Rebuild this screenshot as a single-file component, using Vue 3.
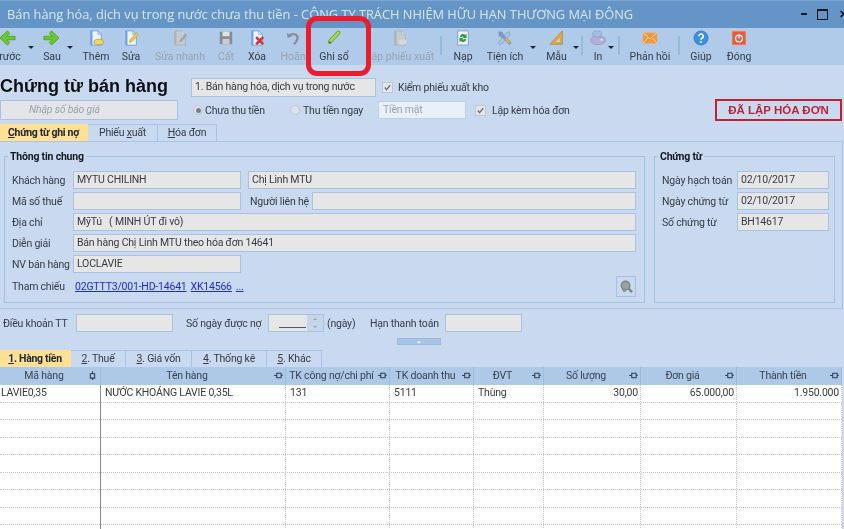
<template>
  <div class="app">
    <header class="titlebar">
      <span class="title">Bán hàng hóa, dịch vụ trong nước chưa thu tiền - CÔNG TY TRÁCH NHIỆM HỮU HẠN THƯƠNG MẠI ĐÔNG</span>
      <div class="winctl">
        <span class="w-min"></span>
        <span class="w-max"></span>
        <span class="w-close">✕</span>
      </div>
    </header>

    <nav class="toolbar">
      <template v-for="(t, i) in tools" :key="i">
        <div v-if="t.kind === 'caret'" class="t-caret" :style="{ width: t.w + 'px' }"><i></i></div>
        <div v-else-if="t.kind === 'sep'" class="t-sep" :style="{ width: t.w + 'px' }"><i></i></div>
        <div v-else-if="t.kind === 'gap'" class="t-gap" :style="{ width: t.w + 'px' }"></div>
        <div v-else class="t-item" :class="{ off: t.off }" :style="{ width: t.w + 'px' }">
          <svg class="t-icon" viewBox="0 0 18 18" width="16" height="16" v-html="t.svg"></svg>
          <span class="t-label">{{ t.label }}</span>
        </div>
      </template>
    </nav>

    <section class="head">
      <div class="head-row one">
        <h1 class="doc-title">Chứng từ bán hàng</h1>
        <div class="inp select">1. Bán hàng hóa, dịch vụ trong nước</div>
        <span class="check"><svg viewBox="0 0 10 10"><path d="M2 5l2 2.4L8 2.5" /></svg></span>
        <span class="lb">Kiểm phiếu xuất kho</span>
      </div>
      <div class="head-row two">
        <div class="inp quote">Nhập số báo giá</div>
        <span class="radio on"></span><span class="lb r1">Chưa thu tiền</span>
        <span class="radio r2"></span><span class="lb r3">Thu tiền ngay</span>
        <div class="inp cash">Tiền mặt</div>
        <span class="check c2"><svg viewBox="0 0 10 10"><path d="M2 5l2 2.4L8 2.5" /></svg></span>
        <span class="lb">Lập kèm hóa đơn</span>
        <div class="stamp">ĐÃ LẬP HÓA ĐƠN</div>
      </div>
    </section>

    <div class="tabs top-tabs">
      <div class="tab active t1"><u>C</u>hứng từ ghi nợ</div>
      <div class="tab t2">Phiếu <u>x</u>uất</div>
      <div class="tab t3"><u>H</u>óa đơn</div>
    </div>

    <section class="panel">
      <fieldset class="group g1">
        <legend>Thông tin chung</legend>
        <div class="rows">
          <div class="row"><label>Khách hàng</label><div class="inp w168">MYTU CHILINH</div><div class="inp grow ml7">Chị Linh MTU</div></div>
          <div class="row"><label>Mã số thuế</label><div class="inp w168"></div><label class="lb2">Người liên hệ</label><div class="inp grow"></div></div>
          <div class="row"><label>Địa chỉ</label><div class="inp grow">MỹTú &nbsp; ( MINH ÚT đi vô)</div></div>
          <div class="row"><label>Diễn giải</label><div class="inp grow">Bán hàng Chị Linh MTU theo hóa đơn 14641</div></div>
          <div class="row"><label>NV bán hàng</label><div class="inp w168">LOCLAVIE</div></div>
          <div class="row refs">
            <label>Tham chiếu</label>
            <a>02GTTT3/001-HD-14641</a><a>XK14566</a><a>...</a>
            <button class="lookup" type="button">
              <svg viewBox="0 0 16 16" width="15" height="15"><circle cx="7" cy="7" r="4.6" fill="#9aa29c" stroke="#7d8580" stroke-width="1.4"/><path d="M10 10l4 4" stroke="#7d8580" stroke-width="2.4"/><path d="M3 11l3-2 2 4-3 1z" fill="#8b918d"/></svg>
            </button>
          </div>
        </div>
      </fieldset>
      <fieldset class="group g2">
        <legend>Chứng từ</legend>
        <div class="rows">
          <div class="row"><label class="l2">Ngày hạch toán</label><div class="inp grow">02/10/2017</div></div>
          <div class="row"><label class="l2">Ngày chứng từ</label><div class="inp grow">02/10/2017</div></div>
          <div class="row"><label class="l2">Số chứng từ</label><div class="inp grow">BH14617</div></div>
        </div>
      </fieldset>
    </section>

    <section class="terms">
      <span class="lb tl1">Điều khoản TT</span>
      <div class="inp ti1"></div>
      <span class="lb tl2">Số ngày được nợ</span>
      <div class="spin"><div class="spin-val"><i></i></div><div class="spin-btn"><b></b><b class="d"></b></div></div>
      <span class="lb tl3">(ngày)</span>
      <span class="lb tl4">Hạn thanh toán</span>
      <div class="inp ti2"></div>
    </section>
    <div class="collapse-wrap"><div class="collapse"><i></i></div></div>

    <div class="tabs low-tabs">
      <div v-for="(t, i) in lowTabs" :key="t.n" class="tab" :class="{ active: i === 0 }" :style="{ width: t.w + 'px' }"><u>{{ t.n }}</u>. {{ t.label }}</div>
    </div>

    <div class="grid">
      <div class="g-row g-head">
        <div v-for="c in cols" :key="c.name" class="g-cell" :style="{ width: c.w + 'px' }">
          <span>{{ c.name }}</span>
          <svg class="pin" :class="{ vert: c.vert }" viewBox="0 0 10 8" width="9" height="7"><path d="M0 4h3M3 1.5h5v5H3zM8 3.8h2" fill="none" stroke="#2c3d52" stroke-width="1.2"/></svg>
        </div>
      </div>
      <div class="g-row g-data">
        <div v-for="(c, i) in cols" :key="c.name" class="g-cell" :class="c.cls" :style="{ width: c.w + 'px' }">{{ firstRow[i] }}</div>
      </div>
      <div v-for="r in 8" :key="r" class="g-row g-data">
        <div v-for="c in cols" :key="c.name" class="g-cell" :class="c.cls" :style="{ width: c.w + 'px' }"></div>
      </div>
    </div>

    <div class="annot"></div>
  </div>
</template>

<script setup>
const doc = (inner, edge = '#6da3dc', fill = '#edf4fc') =>
  `<path d="M3 1h8l4 4v12H3z" fill="${fill}" stroke="${edge}"/><path d="M3 1h2v16H3z" fill="${edge}"/><path d="M11 1v4h4z" fill="#cfe0f3" stroke="${edge}" stroke-width=".6"/>${inner}`
const grayDoc = (inner) => doc(inner, '#aeb3b8', '#c6c9cd')
const arrowL = '<path d="M9.500 1L1 9l8.500 8 2.500-3-3-3h9V7H9l3-3z" fill="#6cc82c" stroke="#3f9a1a" stroke-width=".8" stroke-linejoin="round"/>'
const arrowR = '<path d="M8.500 1L17 9l-8.500 8-2.500-3 3-3H0V7h9L6 4z" fill="#6cc82c" stroke="#3f9a1a" stroke-width=".8" stroke-linejoin="round"/>'

const tools = [
  { label: 'Trước', w: 34, svg: arrowL },
  { kind: 'caret', w: 14 },
  { label: 'Sau', w: 28, svg: arrowR },
  { kind: 'caret', w: 8 },
  { label: 'Thêm', w: 44, svg: doc('<ellipse cx="12" cy="13.500" rx="5.500" ry="3" fill="#f0d65a" stroke="#a88f2e" stroke-width=".7"/>') },
  { label: 'Sửa', w: 26, svg: doc('<path d="M7 14l1-3 7-8 2.500 2-7 8z" fill="#f1c640" stroke="#b5902a" stroke-width=".5"/>') },
  { label: 'Sửa nhanh', w: 72, off: true, svg: grayDoc('<path d="M8 14l1-3 6-7 2 2-6 7z" fill="#a4a7aa"/>') },
  { label: 'Cất', w: 20, off: true, svg: '<path d="M2 2h14v14H2z" fill="#878c92"/><path d="M5 2h8v5H5z" fill="#dfe1e4"/><path d="M5 10h8v6H5z" fill="#c9ccd0"/>' },
  { label: 'Xóa', w: 42, svg: doc('<path d="M8 8l8 8M16 8l-8 8" stroke="#d8393d" stroke-width="3"/>') },
  { label: 'Hoãn', w: 30, off: true, svg: '<path d="M2 3l1 6 5-2z" fill="#8a8f94"/><path d="M5 6c5-3 10-1 9 4-.4 2.500-2 4-4 6" fill="none" stroke="#8a8f94" stroke-width="2.600"/>' },
  { label: 'Ghi sổ', w: 52, svg: '<path d="M4.500 13L14 3" stroke="#5f9a28" stroke-width="4.600" stroke-linecap="round"/><path d="M4.500 13L14 3" stroke="#a0dc4e" stroke-width="3" stroke-linecap="round"/><path d="M3 15.500l.8-3.200 2.400 2.400z" fill="#5c5c50"/>' },
  { label: 'Lập phiếu xuất', w: 80, off: true, svg: grayDoc('<ellipse cx="12" cy="13.500" rx="5" ry="3" fill="#d5d7da"/>') },
  { kind: 'sep', w: 2 },
  { label: 'Nạp', w: 42, svg: '<path d="M3 1h12v16H3z" fill="#e8f0f8" stroke="#7f9cbf"/><path d="M5.500 8a3.500 3.500 0 0 1 6-2.500l1.500-1V9H8.500l1.500-1.500A2 2 0 0 0 7.500 8zM12.500 10a3.500 3.500 0 0 1-6 2.500l-1.500 1V9h4.500L8 10.500a2 2 0 0 0 2.500-.5z" fill="#2f9e36"/>' },
  { label: 'Tiện ích', w: 42, svg: '<path d="M14 2l-3 1-8 9-1.500 3 2 1.500 3-2 8-9z" fill="#a9c6e0" stroke="#6e8fb3" stroke-width=".6"/><path d="M2 2l4 .5 1.500 3.500 8.500 8-2 2.500-8.500-8.500L2.500 7z" fill="#7b9cbd" stroke="#5a7fa8" stroke-width=".5"/><path d="M9.500 9.500l5 5" stroke="#e6b04a" stroke-width="2.400"/>' },
  { kind: 'caret', w: 14 },
  { label: 'Mẫu', w: 33, svg: '<path d="M1 16L15 1v15z" fill="#dba94a" stroke="#a07a2c" stroke-width=".7"/><path d="M8 13.500l4-4.500v4.500z" fill="#c9d8e8"/>' },
  { kind: 'caret', w: 6 },
  { kind: 'sep', w: 6 },
  { kind: 'gap', w: 3 },
  { label: 'In', w: 20, svg: '<ellipse cx="9" cy="11.500" rx="8.500" ry="5" fill="#b5aedb" stroke="#8a86b8" stroke-width=".6"/><ellipse cx="8" cy="4.500" rx="5" ry="3.500" fill="#9fbfe6" stroke="#7a98c0" stroke-width=".6"/><circle cx="13" cy="11" r="1.200" fill="#f2f2fa"/>' },
  { kind: 'caret', w: 6 },
  { kind: 'sep', w: 10 },
  { label: 'Phản hồi', w: 52, svg: '<path d="M1 3h16v12H1z" fill="#f4983a"/><path d="M1 3l8 7 8-7M1 15l6-6.500M17 15l-6-6.500" fill="none" stroke="#fbdcb0" stroke-width="1"/>' },
  { kind: 'sep', w: 6 },
  { label: 'Giúp', w: 38, svg: '<circle cx="9" cy="9" r="8" fill="#3d8fe0" stroke="#2a6cb6" stroke-width=".7"/><path d="M6.500 7a2.500 2.500 0 1 1 3.500 2.300c-.8.400-1 .8-1 1.700" fill="none" stroke="#fff" stroke-width="1.700"/><circle cx="9" cy="13.500" r="1.100" fill="#fff"/>' },
  { label: 'Đóng', w: 38, svg: '<path d="M1 1h16v16H1z" fill="#e85a3e" stroke="#d5c4b4"/><circle cx="9" cy="9.500" r="3.800" fill="none" stroke="#fff" stroke-width="1.400"/><path d="M9 5.500v4" stroke="#fff" stroke-width="1.400"/>' },
]

const lowTabs = [
  { n: '1', label: 'Hàng tiền', w: 71 },
  { n: '2', label: 'Thuế', w: 55 },
  { n: '3', label: 'Giá vốn', w: 66 },
  { n: '4', label: 'Thống kê', w: 75 },
  { n: '5', label: 'Khác', w: 55 },
]

const cols = [
  { name: 'Mã hàng', w: 101, vert: true, cls: 'first' },
  { name: 'Tên hàng', w: 185, cls: '' },
  { name: 'TK công nợ/chi phí', w: 104, cls: '' },
  { name: 'TK doanh thu', w: 84, cls: '' },
  { name: 'ĐVT', w: 70, cls: '' },
  { name: 'Số lượng', w: 97, cls: 'num' },
  { name: 'Đơn giá', w: 96, cls: 'num' },
  { name: 'Thành tiền', w: 105, cls: 'num' },
]
const firstRow = ['LAVIE0,35', 'NƯỚC KHOÁNG LAVIE 0,35L', '131', '5111', 'Thùng', '30,00', '65.000,00', '1.950.000']
</script>

<style>
html, body { margin: 0; background: #c9daf0; }
</style>

<style scoped>
.app {
  position: relative;
  width: 844px;
  height: 529px;
  overflow: hidden;
  background: #c9daf0;
  font-family: Roboto, "Liberation Sans", sans-serif;
  font-size: 10.5px;
  letter-spacing: -0.2px;
  color: #363b45;
  filter: blur(0.35px);
}
.titlebar {
  height: 28px;
  box-sizing: border-box;
  background: #6595c6;
  display: flex;
  align-items: center;
  padding: 0 0 1px 7px;
  border-top: 1px solid #7ea6d0;
}
.title {
  font-family: "Open Sans", sans-serif;
  font-size: 12.8px;
  letter-spacing: 0;
  color: #dbe6f3;
  white-space: nowrap;
}
.winctl {
  margin-left: auto;
  display: flex;
  align-items: center;
  color: #10151c;
  width: 44px;
  flex: none;
}
.w-min { width: 6px; height: 2px; background: #10151c; margin-left: 1px; flex: none; }
.w-max { width: 9px; height: 8px; border: 1px solid #10151c; border-top-width: 2px; margin-left: 10px; box-sizing: content-box; flex: none; }
.w-close { font-size: 11px; font-weight: 700; margin-left: 11px; flex: none; }

.toolbar {
  height: 37px;
  background: #afcbe9;
  display: flex;
  margin-left: -10px;
}
.t-item {
  flex: none;
  display: flex;
  flex-direction: column;
  align-items: center;
  padding-top: 2px;
  box-sizing: border-box;
}
.t-icon { flex: none; overflow: visible; }
.t-label {
  margin-top: 5px;
  font-size: 10.5px;
  letter-spacing: 0;
  line-height: 12px;
  white-space: nowrap;
  color: #333d4b;
}
.off .t-label { color: #98a3b0; }
.t-caret, .t-gap { flex: none; position: relative; }
.t-caret i {
  position: absolute;
  left: 50%;
  top: 18px;
  margin-left: -3px;
  border: 3px solid transparent;
  border-top-color: #1d2630;
  border-bottom: 0;
}
.t-sep { flex: none; display: flex; justify-content: center; padding-top: 8px; box-sizing: border-box; height: 27px; }
.t-sep i { width: 2px; background: #96b9de; }

.head-row { display: flex; align-items: center; }
.head-row.one { height: 35px; padding-top: 9px; box-sizing: border-box; }
.head-row.two { height: 20px; margin-bottom: 4px; }
.doc-title {
  margin: 0;
  width: 191px;
  flex: none;
  font-family: "Liberation Sans", sans-serif;
  font-size: 18px;
  font-weight: 700;
  letter-spacing: 0;
  color: #0d0f14;
  white-space: nowrap;
  padding-bottom: 2px;
  box-sizing: border-box;
}
.inp {
  box-sizing: border-box;
  height: 18px;
  line-height: 15px;
  padding: 0 3px;
  background: #e6e6e6;
  border: 1px solid #a9c2e0;
  white-space: nowrap;
  overflow: hidden;
  flex: none;
}
.select { width: 185px; height: 19px; line-height: 16px; }
.check {
  width: 11px;
  height: 11px;
  flex: none;
  box-sizing: border-box;
  background: #e4e6e9;
  border: 1px solid #bcc8d6;
  margin: 0 5px 0 6px;
  display: flex;
}
.check svg { width: 100%; height: 100%; fill: none; stroke: #6d737b; stroke-width: 1.5; }
.check.c2 { margin: 0 6px 0 9px; }
.quote {
  width: 178px;
  height: 20px;
  line-height: 17px;
  padding-left: 28px;
  background: #e3e5e8;
  color: #9ba3ad;
  font-style: italic;
}
.radio {
  width: 10px;
  height: 10px;
  flex: none;
  box-sizing: border-box;
  border-radius: 50%;
  background: #dfe3e8;
  border: 1px solid #bcc8d6;
  margin: 0 2px 0 15px;
  position: relative;
}
.radio.on::after {
  content: "";
  position: absolute;
  inset: 1.5px;
  border-radius: 50%;
  background: #7a7f86;
}
.radio.r2 { margin: 0 3px 0 27px; }
.lb { white-space: nowrap; }
.r1 { width: 58px; flex: none; }
.r3 { width: 58px; flex: none; margin-right: 17px; }
.cash { width: 88px; background: #eaf0f8; color: #9aa4b0; border-color: #bcd0e8; padding-left: 4px; }
.stamp {
  margin-left: auto;
  margin-right: 2px;
  width: 127px;
  height: 22px;
  flex: none;
  box-sizing: border-box;
  border: 2px solid #bd2333;
  color: #bd2333;
  font-family: "Liberation Sans", sans-serif;
  font-size: 11.5px;
  font-weight: 700;
  letter-spacing: 0;
  text-align: center;
  line-height: 18px;
}

.tabs { display: flex; }
.top-tabs { height: 17px; }
.tab {
  box-sizing: border-box;
  height: 100%;
  text-align: center;
  line-height: 15px;
  border: 1px solid #a9c4e4;
  border-bottom: 0;
  border-left: 0;
  white-space: nowrap;
  flex: none;
  background: #c9daf0;
}
.tab.active { background: #ffe196; font-weight: 700; letter-spacing: -0.3px; color: #232830; border-color: #ffe196; }
.t1 { width: 88px; }
.t2 { width: 70px; }
.t3 { width: 59px; }

.panel {
  box-sizing: border-box;
  height: 168px;
  width: 843px;
  border: 1px solid #a9c4e4;
  border-left: 0;
  display: flex;
  padding: 8px 0 0 4px;
  gap: 9px;
}
.group {
  margin: 0;
  box-sizing: border-box;
  height: 153px;
  border: 1px solid #a5c1e2;
  padding: 0 8px 0 7px;
  min-width: 0;
  flex: none;
}
.group legend {
  padding: 0 2px;
  margin-left: -4px;
  font-weight: 700;
  color: #14181f;
  line-height: 13px;
}
.g1 { width: 641px; }
.g2 { width: 181px; padding-right: 5px; }
.rows { display: flex; flex-direction: column; gap: 3px; margin-top: 8px; }
.row { display: flex; align-items: center; height: 18px; }
.row label { width: 61px; flex: none; white-space: nowrap; }
.row label.l2 { width: 75px; }
.row label.lb2 { width: 62px; margin-left: 9px; }
.w168 { width: 168px; }
.grow { flex: 1; min-width: 0; }
.ml7 { margin-left: 7px; }
.refs { margin-top: 1px; position: relative; }
.refs a { color: #1f2bd6; text-decoration: underline; margin-left: 2px; margin-right: 2px; }
.lookup {
  position: absolute;
  right: 0;
  top: -1px;
  width: 20px;
  height: 21px;
  padding: 0;
  background: #c9daf0;
  border: 1px solid #a5c1e2;
  display: flex;
  align-items: center;
  justify-content: center;
}

.terms { display: flex; align-items: center; height: 18px; margin-top: 5px; padding-left: 3px; }
.tl1 { width: 73px; flex: none; }
.ti1 { width: 97px; }
.tl2 { margin-left: 13px; width: 82px; flex: none; }
.spin { display: flex; width: 56px; height: 18px; flex: none; box-sizing: border-box; border: 1px solid #a9c2e0; background: #e6e6e6; }
.spin-val { flex: 1; position: relative; }
.spin-val i { position: absolute; left: 10px; right: 1px; bottom: 3px; height: 1px; background: #5b5277; }
.spin-btn { width: 16px; background: #c6d6ea; display: flex; flex-direction: column; align-items: center; justify-content: space-around; }
.spin-btn b { width: 0; height: 0; border: 2px solid transparent; border-bottom-color: #93a3b6; border-top: 0; }
.spin-btn b.d { border-top: 2px solid #93a3b6; border-bottom: 0; }
.tl3 { margin-left: 3px; width: 43px; flex: none; }
.tl4 { width: 75px; flex: none; }
.ti2 { width: 77px; }

.collapse-wrap { height: 18px; padding: 6px 0 0 397px; box-sizing: border-box; }
.collapse { width: 44px; height: 7px; background: #a8c4e6; border: 1px solid #9cbadf; box-sizing: border-box; display: flex; justify-content: center; align-items: center; }
.collapse i { width: 0; height: 0; border: 2px solid transparent; border-bottom-color: #fff; border-top: 0; }

.low-tabs { height: 17px; }

.grid { width: 842px; background: #fff; }
.g-row { display: flex; }
.g-head { height: 18px; background: #aec9e8; }
.g-cell {
  flex: none;
  box-sizing: border-box;
  position: relative;
  text-align: center;
  white-space: nowrap;
}
.g-head .g-cell {
  line-height: 17px;
  border-right: 1px solid #9dbde0;
  padding-right: 12px;
  color: #3a4450;
}
.pin { position: absolute; right: 2px; top: 5px; }
.pin.vert { transform: rotate(90deg); right: 3px; }
.g-data { height: 17.5px; border-bottom: 1px dotted #c6c6c6; box-sizing: border-box; }
.g-data .g-cell {
  text-align: left;
  padding: 1px 0 0 4px;
  line-height: 14px;
  border-right: 1px dotted #cccccc;
}
.g-data .g-cell.first { border-right: 0; padding-left: 1px; }
.g-data .g-cell.first::after {
  content: "";
  position: absolute;
  top: 0;
  right: 0;
  bottom: -1px;
  width: 1px;
  background: #8c8c8c;
}
.g-data .g-cell.num { text-align: right; padding-right: 2px; }

.annot {
  position: absolute;
  left: 306px;
  top: 16px;
  width: 65px;
  height: 60px;
  box-sizing: border-box;
  border: 5px solid #ea1c2d;
  border-radius: 11px;
}
</style>
